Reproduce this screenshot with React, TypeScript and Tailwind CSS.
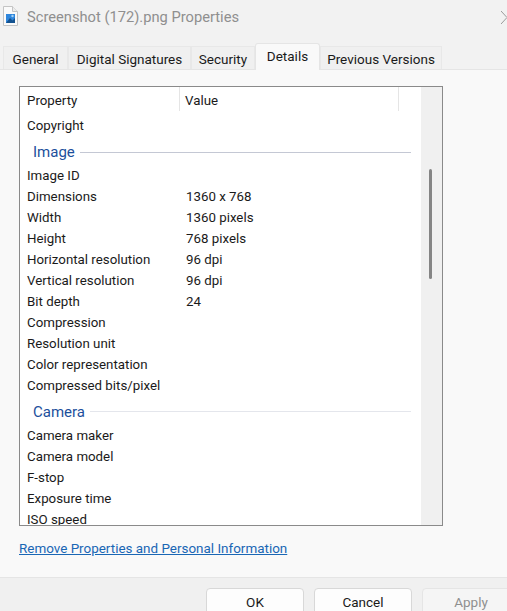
const font = "font-['Roboto','Noto_Sans',sans-serif]"

type Row = { name: string; value?: string }

const imageRows: Row[] = [
  { name: "Image ID" },
  { name: "Dimensions", value: "1360 x 768" },
  { name: "Width", value: "1360 pixels" },
  { name: "Height", value: "768 pixels" },
  { name: "Horizontal resolution", value: "96 dpi" },
  { name: "Vertical resolution", value: "96 dpi" },
  { name: "Bit depth", value: "24" },
  { name: "Compression" },
  { name: "Resolution unit" },
  { name: "Color representation" },
  { name: "Compressed bits/pixel" },
]

const cameraRows: Row[] = [
  { name: "Camera maker" },
  { name: "Camera model" },
  { name: "F-stop" },
  { name: "Exposure time" },
  { name: "ISO speed" },
]

const tabs = [
  { label: "General", width: "w-[65px]" },
  { label: "Digital Signatures", width: "w-[123px]" },
  { label: "Security", width: "w-[64px]" },
  { label: "Details", width: "w-[65px]", active: true },
  { label: "Previous Versions", width: "w-[122px]" },
]

const PropRow = ({ name, value }: Row) => (
  <div className="flex h-[21px] items-center pl-[7px] text-[13.3px] text-[#1a1a1a]">
    <span className="w-[159px] shrink-0 whitespace-nowrap">{name}</span>
    {value ? <span className="whitespace-nowrap">{value}</span> : null}
  </div>
)

const Group = ({ title, line }: { title: string; line: string }) => (
  <div className="flex h-[25px] items-center pl-[13px] pr-[10px]">
    <span className="text-[15px] text-[#1c4f9c]">{title}</span>
    <div className={`ml-[5px] h-px flex-1 ${line}`} />
  </div>
)

const FileIcon = () => (
  <svg width="15" height="20" viewBox="0 0 15 20">
    <path d="M.5.5h9l5 5v14H.5z" fill="#fafafa" stroke="#c4c4c4" />
    <path d="M9.5.5v5h5" fill="#ececec" stroke="#c4c4c4" />
    <rect x="3" y="8" width="9" height="9" fill="#2f86dc" />
    <path d="M3 17l4-5 2.5 2.5L12 12v5z" fill="#14528f" />
    <circle cx="9.5" cy="10" r="1.2" fill="#a6d4f5" />
  </svg>
)

export default function App() {
  return (
    <div className={`${font} flex h-[611px] w-[507px] flex-col overflow-hidden bg-[#f9f9f9]`}>
      <div className="flex h-[43px] shrink-0 items-start bg-[#f2f2f2] pl-[3px] pt-[6px]">
        <FileIcon />
        <span className="ml-[9px] text-[14.7px] text-[#8f8f8f]">Screenshot (172).png Properties</span>
        <svg className="ml-auto mt-[5px]" width="6" height="13" viewBox="0 0 6 13">
          <path d="M0 0l6 6.5L0 13" fill="none" stroke="#9a9a9a" />
        </svg>
      </div>

      <div className="flex h-[27px] shrink-0 items-end border-b border-[#e5e5e5] bg-[#f2f2f2] pl-[3px]">
        {tabs.map((tab) =>
          tab.active ? (
            <div
              key={tab.label}
              className={`${tab.width} -mb-px flex h-[27px] items-start justify-center rounded-t-[3px] border border-b-0 border-[#e5e5e5] bg-[#f9f9f9] pt-[2px] text-[13.5px] text-[#1a1a1a]`}
            >
              {tab.label}
            </div>
          ) : (
            <div
              key={tab.label}
              className={`${tab.width} flex h-[23px] items-center justify-center border border-b-0 border-[#e8e8e8] bg-[#f0f0f0] pt-[2px] text-[13.5px] text-[#1a1a1a]`}
            >
              {tab.label}
            </div>
          )
        )}
      </div>

      <div className="flex flex-1 flex-col px-[19px] pt-[16px]">
        <div className="flex h-[440px] w-[424px] overflow-hidden border border-[#8a8a8a] bg-white">
          <div className="flex-1 overflow-hidden">
            <div className="flex h-[26px] items-start text-[13.3px] text-[#1a1a1a]">
              <span className="h-[24px] w-[160px] border-r border-[#e5e5e5] pl-[7px] pt-[2px] leading-[24px]">Property</span>
              <span className="h-[24px] w-[219px] border-r border-[#e5e5e5] pl-[5px] pt-[2px] leading-[24px]">Value</span>
            </div>
            <div className="h-[2px]" />
            <PropRow name="Copyright" />
            <div className="h-[4px]" />
            <Group title="Image" line="bg-[#c4c8d4]" />
            {imageRows.map((row) => (
              <PropRow key={row.name} {...row} />
            ))}
            <div className="h-[4px]" />
            <Group title="Camera" line="-translate-y-px bg-[#e4e6ec]" />
            {cameraRows.map((row) => (
              <PropRow key={row.name} {...row} />
            ))}
          </div>
          <div className="w-[21px] shrink-0 bg-[#f0f0f0] pl-[8px] pt-[82px]">
            <div className="h-[110px] w-[3px] rounded-full bg-[#858585]" />
          </div>
        </div>
        <a className="mt-[13px] text-[13.45px] text-[#1a67b5] underline">Remove Properties and Personal Information</a>
      </div>

      <div className="flex h-[34px] shrink-0 justify-end gap-[10px] border-t border-[#e5e5e5] bg-[#f0f0f0] pt-[10px]">
        <button className="-mb-2 h-[32px] w-[98px] rounded-[4px] border border-[#d8d8d8] bg-[#fdfdfd] pb-[3px] text-[13.5px] text-[#1a1a1a]">OK</button>
        <button className="-mb-2 h-[32px] w-[98px] rounded-[4px] border border-[#d8d8d8] bg-[#fdfdfd] pb-[3px] text-[13.5px] text-[#1a1a1a]">Cancel</button>
        <button className="-mb-2 -mr-[13px] h-[32px] w-[98px] rounded-[4px] border border-[#e5e5e5] bg-[#f5f5f5] pb-[3px] text-[13.5px] text-[#8f8f8f]">Apply</button>
      </div>
    </div>
  )
}
